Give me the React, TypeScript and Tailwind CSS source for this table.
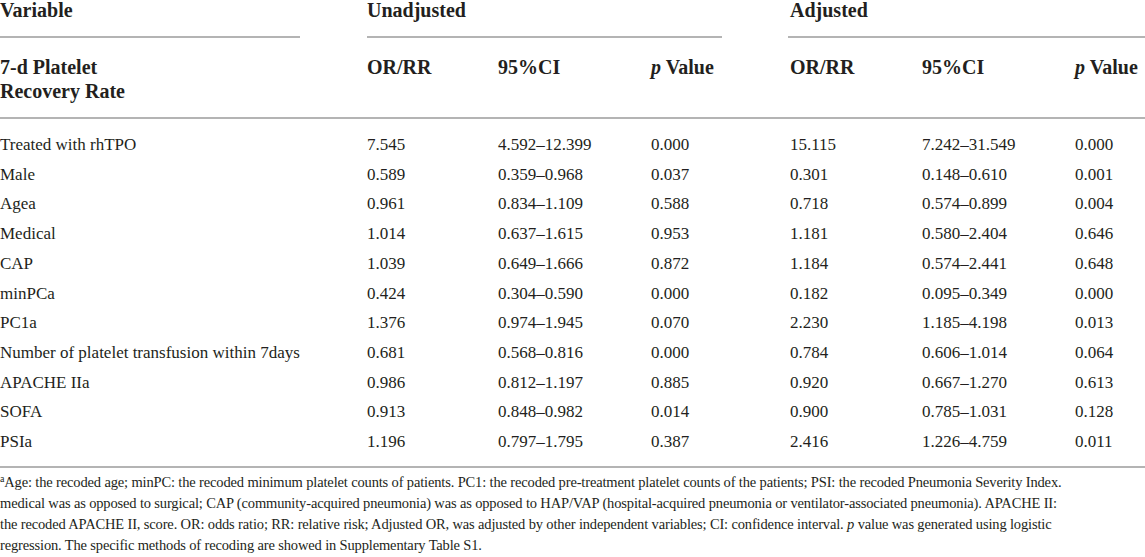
import React from 'react';

// ── 표 데이터 ────────────────────────────────────────────────────────────────

const ROWS: [string, string, string, string, string, string, string][] = [
  ['Treated with rhTPO', '7.545', '4.592–12.399', '0.000', '15.115', '7.242–31.549', '0.000'],
  ['Male', '0.589', '0.359–0.968', '0.037', '0.301', '0.148–0.610', '0.001'],
  ['Agea', '0.961', '0.834–1.109', '0.588', '0.718', '0.574–0.899', '0.004'],
  ['Medical', '1.014', '0.637–1.615', '0.953', '1.181', '0.580–2.404', '0.646'],
  ['CAP', '1.039', '0.649–1.666', '0.872', '1.184', '0.574–2.441', '0.648'],
  ['minPCa', '0.424', '0.304–0.590', '0.000', '0.182', '0.095–0.349', '0.000'],
  ['PC1a', '1.376', '0.974–1.945', '0.070', '2.230', '1.185–4.198', '0.013'],
  ['Number of platelet transfusion within 7days', '0.681', '0.568–0.816', '0.000', '0.784', '0.606–1.014', '0.064'],
  ['APACHE IIa', '0.986', '0.812–1.197', '0.885', '0.920', '0.667–1.270', '0.613'],
  ['SOFA', '0.913', '0.848–0.982', '0.014', '0.900', '0.785–1.031', '0.128'],
  ['PSIa', '1.196', '0.797–1.795', '0.387', '2.416', '1.226–4.759', '0.011'],
];

const COLS = 'grid grid-cols-[367px_131px_153px_139px_132px_153px_70px]';

function PValue() {
  return (
    <span>
      <i>p</i> Value
    </span>
  );
}

export default function App() {
  return (
    <div
      className="w-[1145px] h-[557px] overflow-hidden bg-white text-[#231f20]"
      style={{ fontFamily: '"Liberation Serif", "Times New Roman", serif' }}
    >
      {/* 헤더 1행 */}
      <div className={`${COLS} text-[20px] font-bold leading-[20px]`}>
        <div className="flex flex-col">
          <span className="h-[36px]">Variable</span>
          <div className="w-[300px] h-[2px] bg-[#b4b4b4]" />
        </div>
        <div className="col-span-3 flex flex-col">
          <span className="h-[36px]">Unadjusted</span>
          <div className="w-[355px] h-[2px] bg-[#b4b4b4]" />
        </div>
        <div className="col-span-3 flex flex-col -ml-[2px]">
          <span className="h-[36px] pl-[2px]">Adjusted</span>
          <div className="h-[2px] bg-[#b4b4b4]" />
        </div>
      </div>

      {/* 헤더 2행 */}
      <div className={`${COLS} text-[20px] font-bold leading-[24px] pt-[17px] h-[81px] border-b-2 border-[#b4b4b4]`}>
        <div>
          7-d Platelet
          <br />
          Recovery Rate
        </div>
        <div>OR/RR</div>
        <div>95%CI</div>
        <div>
          <PValue />
        </div>
        <div>OR/RR</div>
        <div>95%CI</div>
        <div className="whitespace-nowrap">
          <PValue />
        </div>
      </div>

      {/* 본문 */}
      <div className="pt-[11px] pb-[9px] border-b-2 border-[#b4b4b4] text-[17px]">
        {ROWS.map((r) => (
          <div key={r[0]} className={`${COLS} h-[29.7px] items-center`}>
            {r.map((c, i) => (
              <div key={i} className="whitespace-nowrap">
                {c}
              </div>
            ))}
          </div>
        ))}
      </div>

      {/* 각주 */}
      <p className="pt-[4px] text-[14.5px] tracking-[-0.15px] leading-[21.3px] text-[#231f20]">
        <sup className="text-[10px]">a</sup>Age: the recoded age; minPC: the recoded minimum platelet counts of patients. PC1: the recoded pre-treatment platelet counts of the patients; PSI: the recoded Pneumonia Severity Index.
        <br />
        medical was as opposed to surgical; CAP (community-acquired pneumonia) was as opposed to HAP/VAP (hospital-acquired pneumonia or ventilator-associated pneumonia). APACHE II:
        <br />
        the recoded APACHE II, score. OR: odds ratio; RR: relative risk; Adjusted OR, was adjusted by other independent variables; CI: confidence interval. <i>p</i> value was generated using logistic
        <br />
        regression. The specific methods of recoding are showed in Supplementary Table S1.
      </p>
    </div>
  );
}
